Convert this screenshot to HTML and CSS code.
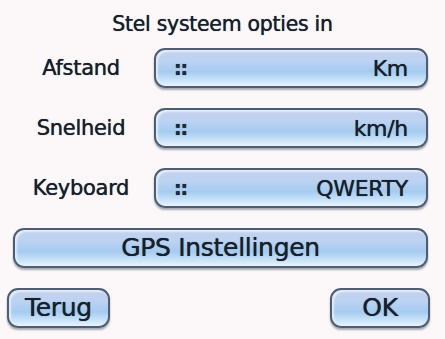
FILE: index.html
```html
<!DOCTYPE html>
<html>
<head>
<meta charset="utf-8">
<link rel="stylesheet" href="styles.css">
</head>
<body>
<div class="screen">
  <div class="title">Stel systeem opties in</div>
  <div class="row">
    <div class="label">Afstand</div>
    <div class="field pill"><span class="grip">::</span><span class="val">Km</span></div>
  </div>
  <div class="row">
    <div class="label">Snelheid</div>
    <div class="field pill"><span class="grip">::</span><span class="val">km/h</span></div>
  </div>
  <div class="row">
    <div class="label">Keyboard</div>
    <div class="field pill"><span class="grip">::</span><span class="val">QWERTY</span></div>
  </div>
  <div class="gps pill">GPS Instellingen</div>
  <div class="bottom">
    <div class="btn pill">Terug</div>
    <div class="btn ok pill">OK</div>
  </div>
</div>
</body>
</html>
```
FILE: styles.css
```css
html, body {
  margin: 0;
  padding: 0;
  background: #fcf8fa;
}
.screen {
  width: 445px;
  height: 339px;
  display: flex;
  flex-direction: column;
  padding-top: 9px;
  box-sizing: border-box;
  font-family: "DejaVu Sans", sans-serif;
  color: #18202c;
  text-shadow: 0 0 0.7px #18202c;
  letter-spacing: -0.3px;
}
.title {
  height: 30px;
  line-height: 30px;
  text-align: center;
  font-size: 20.5px;
  margin-bottom: 9px;
}
.row {
  display: flex;
  align-items: center;
  height: 40px;
  margin-bottom: 20px;
}
.label {
  width: 146px;
  padding-left: 8px;
  text-align: center;
  font-size: 21px;
}
.pill {
  box-sizing: border-box;
  border: 2px solid #4d5d74;
  border-radius: 11px;
  background: linear-gradient(to bottom, #c3d0ec 0%, #bcd3f2 30%, #a6cbf0 60%, #cbe4fa 85%, #e9f4fc 100%);
  box-shadow: 0 2px 2px rgba(60, 70, 90, 0.45), inset 2px 2px 2px rgba(255,255,255,0.6);
}
.field {
  width: 274px;
  height: 40px;
  display: flex;
  align-items: center;
  justify-content: space-between;
  padding: 0 18px 0 18px;
}
.grip {
  font-weight: bold;
  font-size: 19px;
  letter-spacing: -1px;
  color: #1e2a3c;
}
.val {
  font-size: 22px;
}
.gps {
  margin-left: 13px;
  width: 415px;
  height: 40px;
  line-height: 36px;
  text-align: center;
  font-size: 25px;
  margin-bottom: 20px;
}
.bottom {
  display: flex;
  justify-content: space-between;
  padding: 0 15px 0 7px;
}
.btn {
  width: 103px;
  height: 40px;
  line-height: 36px;
  text-align: center;
  font-size: 25px;
}
.ok {
  width: 100px;
}
```
